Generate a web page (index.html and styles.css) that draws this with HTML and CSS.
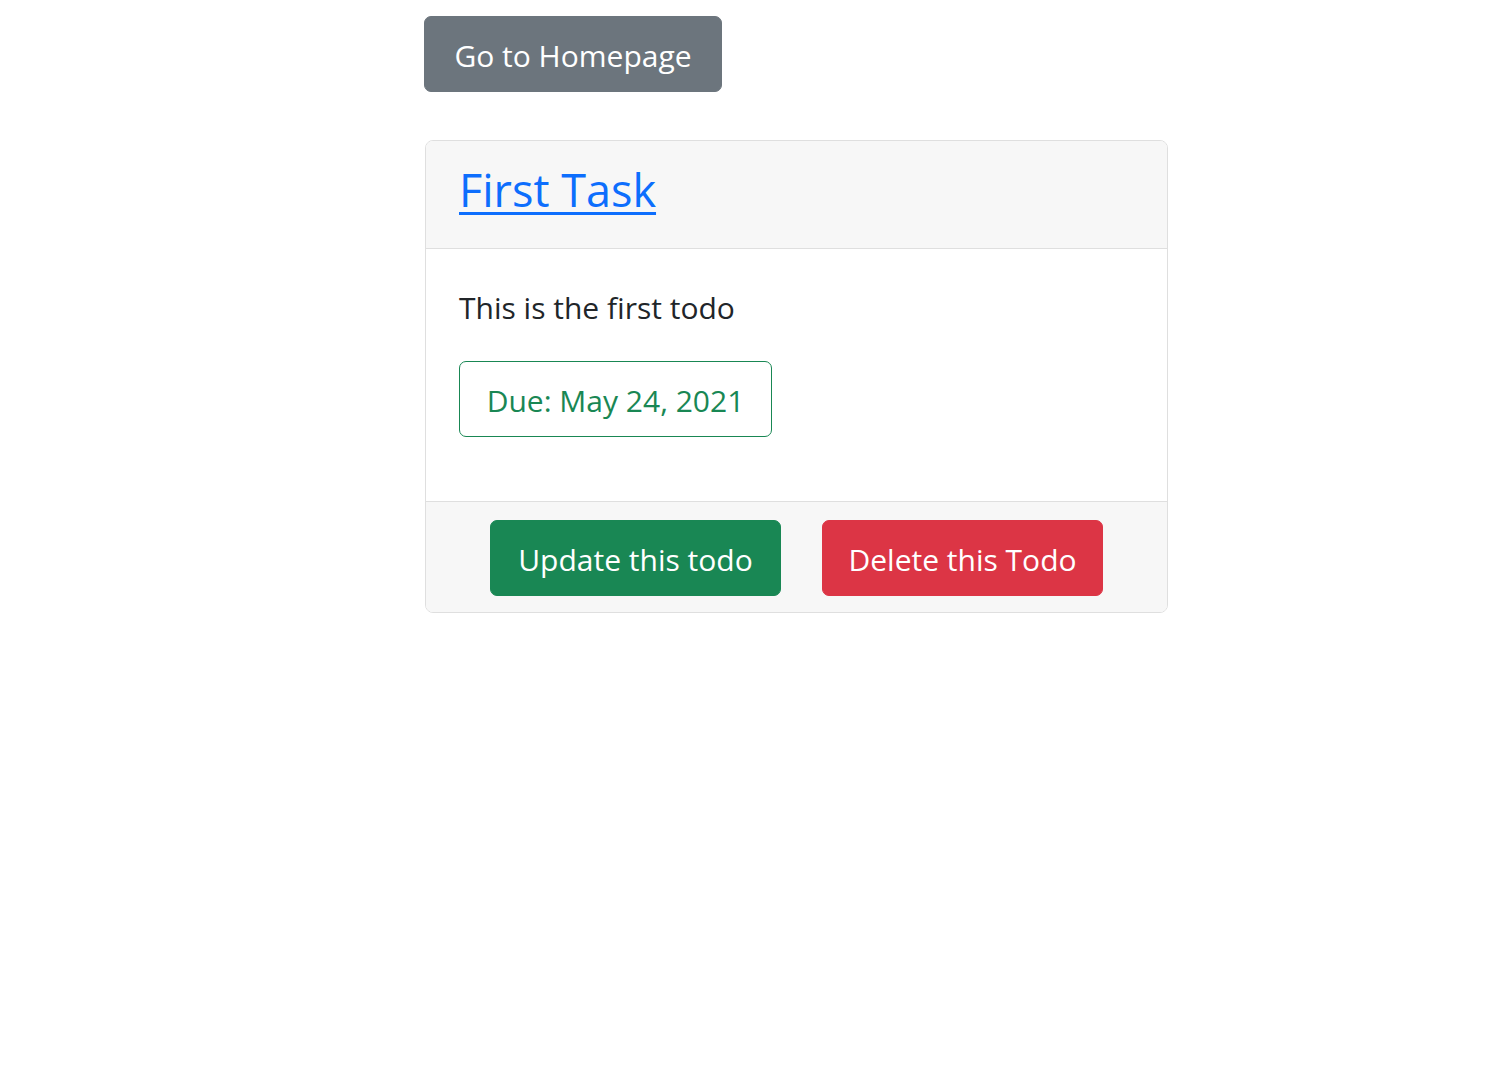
FILE: index.html
```html
<!DOCTYPE html>
<html lang="en">
<head>
<meta charset="utf-8">
<title>First Task</title>
<link rel="stylesheet" href="styles.css">
</head>
<body>
<div class="container">
  <a class="btn btn-secondary btn-home" href="#">Go to Homepage</a>
  <div class="card">
    <div class="card-header">
      <h2 class="card-title"><a href="#">First Task</a></h2>
    </div>
    <div class="card-body">
      <p class="card-text">This is the first todo</p>
      <div class="due">Due: May 24, 2021</div>
    </div>
    <div class="card-footer">
      <a class="btn btn-success btn-update" href="#">Update this todo</a>
      <a class="btn btn-danger btn-delete" href="#">Delete this Todo</a>
    </div>
  </div>
</div>
</body>
</html>
```

FILE: styles.css
```css
* { box-sizing: border-box; }

html, body {
  margin: 0;
  padding: 0;
  background: #fff;
}

body {
  font-family: "Open Sans", "Noto Sans", "Liberation Sans", sans-serif;
  font-size: 30px;
  color: #212529;
}

.container {
  width: 744px;
  margin-left: 424px;
  padding-top: 16px;
}

.btn {
  display: inline-flex;
  align-items: center;
  justify-content: center;
  height: 76px;
  border-radius: 7px;
  font-size: 30px;
  color: #fff;
  text-decoration: none;
  border: 1px solid transparent;
  padding: 2px 0 0 0;
}

.btn-secondary { background: #6c757d; border-color: #6c757d; }
.btn-success { background: #198754; border-color: #198754; }
.btn-danger { background: #dc3545; border-color: #dc3545; }

.btn-home { width: 298px; }
.btn-update { width: 291px; }
.btn-delete { width: 281px; }

.card {
  margin-top: 48px;
  margin-left: 1px;
  border: 1px solid #dfdfdf;
  border-radius: 8px;
  overflow: hidden;
}

.card-header {
  background: #f7f7f7;
  border-bottom: 1px solid #dfdfdf;
  padding: 19px 33px 13px;
}

.card-title {
  margin: 0 0 16px;
  font-size: 45px;
  font-weight: 400;
  line-height: 59px;
}

.card-title a {
  color: #0d6efd;
  text-decoration: underline;
  text-decoration-thickness: 3px;
  text-underline-offset: 5px;
}

.card-body {
  padding: 35px 33px 64px;
}

.card-text {
  margin: 0 0 29px;
  line-height: 48px;
}

.due {
  display: inline-flex;
  align-items: center;
  justify-content: center;
  width: 313px;
  height: 76px;
  padding-top: 2px;
  border: 1px solid #198754;
  border-radius: 7px;
  color: #198754;
}

.card-footer {
  background: #f7f7f7;
  border-top: 1px solid #dfdfdf;
  padding: 18px 33px 16px;
  display: flex;
  justify-content: center;
  gap: 41px;
}
```
